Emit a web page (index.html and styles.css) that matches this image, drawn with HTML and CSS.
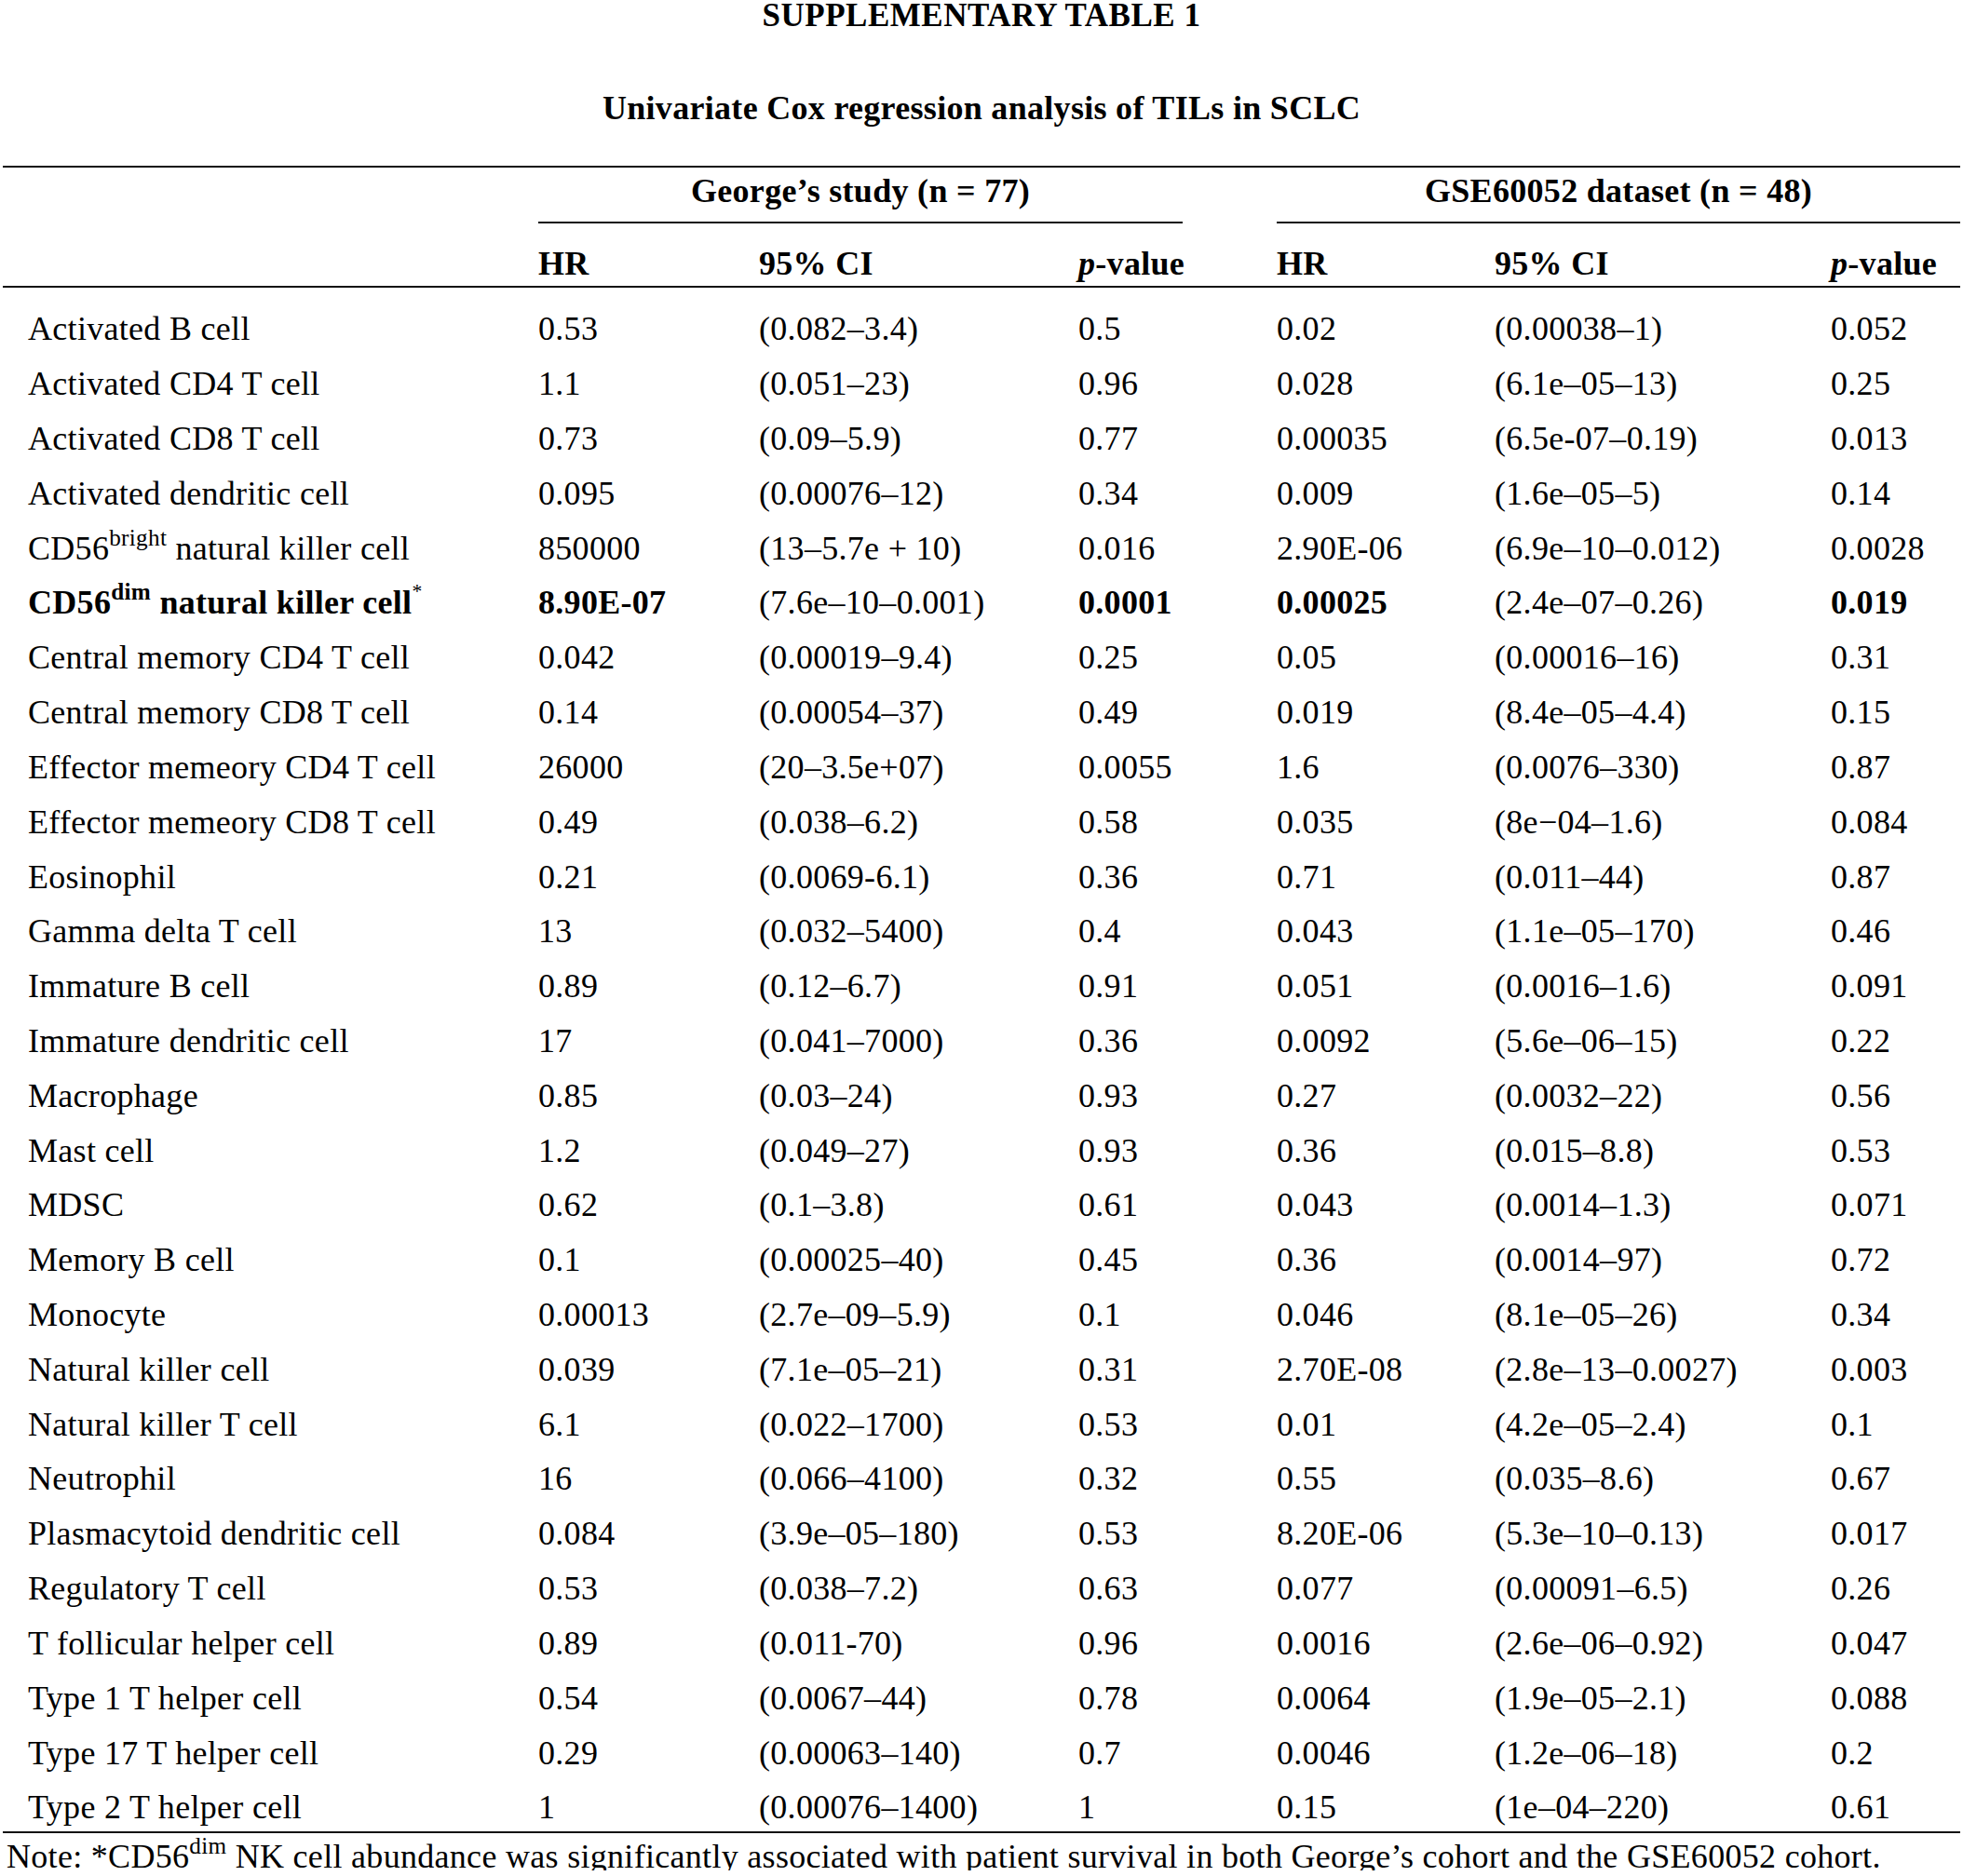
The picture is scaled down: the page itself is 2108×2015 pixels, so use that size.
FILE: index.html
```html
<!DOCTYPE html>
<html lang="en">
<head>
<meta charset="utf-8">
<title>Supplementary Table 1</title>
<link rel="stylesheet" href="styles.css">
</head>
<body>
<h1 class="title">SUPPLEMENTARY TABLE 1</h1>
<h2 class="subtitle">Univariate Cox regression analysis of TILs in SCLC</h2>
<table class="tbl">
  <colgroup>
    <col class="c-label">
    <col class="c-hr1">
    <col class="c-ci1">
    <col class="c-p1">
    <col class="c-hr2">
    <col class="c-ci2">
    <col class="c-p2">
  </colgroup>
  <thead>
    <tr class="groups">
      <th></th>
      <th colspan="3" class="grp grp-a"><div class="grp-line">George’s study (n = 77)</div></th>
      <th colspan="3" class="grp grp-b"><div class="grp-line">GSE60052 dataset (n = 48)</div></th>
    </tr>
    <tr class="cols">
      <th></th>
      <th>HR</th>
      <th>95% CI</th>
      <th><i>p</i>-value</th>
      <th>HR</th>
      <th>95% CI</th>
      <th><i>p</i>-value</th>
    </tr>
  </thead>
  <tbody>
    <tr class="first"><td>Activated B cell</td><td>0.53</td><td>(0.082–3.4)</td><td>0.5</td><td>0.02</td><td>(0.00038–1)</td><td>0.052</td></tr>
    <tr><td>Activated CD4 T cell</td><td>1.1</td><td>(0.051–23)</td><td>0.96</td><td>0.028</td><td>(6.1e–05–13)</td><td>0.25</td></tr>
    <tr><td>Activated CD8 T cell</td><td>0.73</td><td>(0.09–5.9)</td><td>0.77</td><td>0.00035</td><td>(6.5e-07–0.19)</td><td>0.013</td></tr>
    <tr><td>Activated dendritic cell</td><td>0.095</td><td>(0.00076–12)</td><td>0.34</td><td>0.009</td><td>(1.6e–05–5)</td><td>0.14</td></tr>
    <tr><td>CD56<sup>bright</sup> natural killer cell</td><td>850000</td><td>(13–5.7e + 10)</td><td>0.016</td><td>2.90E-06</td><td>(6.9e–10–0.012)</td><td>0.0028</td></tr>
    <tr class="sig"><td><b>CD56<sup>dim</sup> natural killer cell<sup class="ast">*</sup></b></td><td><b>8.90E-07</b></td><td>(7.6e–10–0.001)</td><td><b>0.0001</b></td><td><b>0.00025</b></td><td>(2.4e–07–0.26)</td><td><b>0.019</b></td></tr>
    <tr><td>Central memory CD4 T cell</td><td>0.042</td><td>(0.00019–9.4)</td><td>0.25</td><td>0.05</td><td>(0.00016–16)</td><td>0.31</td></tr>
    <tr><td>Central memory CD8 T cell</td><td>0.14</td><td>(0.00054–37)</td><td>0.49</td><td>0.019</td><td>(8.4e–05–4.4)</td><td>0.15</td></tr>
    <tr><td>Effector memeory CD4 T cell</td><td>26000</td><td>(20–3.5e+07)</td><td>0.0055</td><td>1.6</td><td>(0.0076–330)</td><td>0.87</td></tr>
    <tr><td>Effector memeory CD8 T cell</td><td>0.49</td><td>(0.038–6.2)</td><td>0.58</td><td>0.035</td><td>(8e−04–1.6)</td><td>0.084</td></tr>
    <tr><td>Eosinophil</td><td>0.21</td><td>(0.0069-6.1)</td><td>0.36</td><td>0.71</td><td>(0.011–44)</td><td>0.87</td></tr>
    <tr><td>Gamma delta T cell</td><td>13</td><td>(0.032–5400)</td><td>0.4</td><td>0.043</td><td>(1.1e–05–170)</td><td>0.46</td></tr>
    <tr><td>Immature B cell</td><td>0.89</td><td>(0.12–6.7)</td><td>0.91</td><td>0.051</td><td>(0.0016–1.6)</td><td>0.091</td></tr>
    <tr><td>Immature dendritic cell</td><td>17</td><td>(0.041–7000)</td><td>0.36</td><td>0.0092</td><td>(5.6e–06–15)</td><td>0.22</td></tr>
    <tr><td>Macrophage</td><td>0.85</td><td>(0.03–24)</td><td>0.93</td><td>0.27</td><td>(0.0032–22)</td><td>0.56</td></tr>
    <tr><td>Mast cell</td><td>1.2</td><td>(0.049–27)</td><td>0.93</td><td>0.36</td><td>(0.015–8.8)</td><td>0.53</td></tr>
    <tr><td>MDSC</td><td>0.62</td><td>(0.1–3.8)</td><td>0.61</td><td>0.043</td><td>(0.0014–1.3)</td><td>0.071</td></tr>
    <tr><td>Memory B cell</td><td>0.1</td><td>(0.00025–40)</td><td>0.45</td><td>0.36</td><td>(0.0014–97)</td><td>0.72</td></tr>
    <tr><td>Monocyte</td><td>0.00013</td><td>(2.7e–09–5.9)</td><td>0.1</td><td>0.046</td><td>(8.1e–05–26)</td><td>0.34</td></tr>
    <tr><td>Natural killer cell</td><td>0.039</td><td>(7.1e–05–21)</td><td>0.31</td><td>2.70E-08</td><td>(2.8e–13–0.0027)</td><td>0.003</td></tr>
    <tr><td>Natural killer T cell</td><td>6.1</td><td>(0.022–1700)</td><td>0.53</td><td>0.01</td><td>(4.2e–05–2.4)</td><td>0.1</td></tr>
    <tr><td>Neutrophil</td><td>16</td><td>(0.066–4100)</td><td>0.32</td><td>0.55</td><td>(0.035–8.6)</td><td>0.67</td></tr>
    <tr><td>Plasmacytoid dendritic cell</td><td>0.084</td><td>(3.9e–05–180)</td><td>0.53</td><td>8.20E-06</td><td>(5.3e–10–0.13)</td><td>0.017</td></tr>
    <tr><td>Regulatory T cell</td><td>0.53</td><td>(0.038–7.2)</td><td>0.63</td><td>0.077</td><td>(0.00091–6.5)</td><td>0.26</td></tr>
    <tr><td>T follicular helper cell</td><td>0.89</td><td>(0.011-70)</td><td>0.96</td><td>0.0016</td><td>(2.6e–06–0.92)</td><td>0.047</td></tr>
    <tr><td>Type 1 T helper cell</td><td>0.54</td><td>(0.0067–44)</td><td>0.78</td><td>0.0064</td><td>(1.9e–05–2.1)</td><td>0.088</td></tr>
    <tr><td>Type 17 T helper cell</td><td>0.29</td><td>(0.00063–140)</td><td>0.7</td><td>0.0046</td><td>(1.2e–06–18)</td><td>0.2</td></tr>
    <tr><td>Type 2 T helper cell</td><td>1</td><td>(0.00076–1400)</td><td>1</td><td>0.15</td><td>(1e–04–220)</td><td>0.61</td></tr>
  </tbody>
</table>
<p class="note">Note: *CD56<sup>dim</sup> NK cell abundance was significantly associated with patient survival in both George’s cohort and the GSE60052 cohort.</p>
</body>
</html>
```

FILE: styles.css
```css
html, body {
  margin: 0;
  padding: 0;
  background: #fff;
}

body {
  padding-top: 1px;
  font-family: "Liberation Serif", "Times New Roman", serif;
  font-size: 36px;
  letter-spacing: 0.3px;
  color: #000;
}

.title {
  margin: 0;
  font-size: 35px;
  letter-spacing: 0.5px;
  font-weight: bold;
  line-height: 32px;
  text-align: center;
}

.subtitle {
  margin: 67px 0 0;
  font-size: 36px;
  font-weight: bold;
  line-height: 32px;
  text-align: center;
}

.tbl {
  margin: 46px 0 0 3px;
  width: 2102px;
  table-layout: fixed;
  border-collapse: separate;
  border-spacing: 0;
  border-top: 2px solid #111;
  border-bottom: 2px solid #111;
}

.c-label { width: 575px; }
.c-hr1 { width: 237px; }
.c-ci1 { width: 343px; }
.c-p1 { width: 213px; }
.c-hr2 { width: 234px; }
.c-ci2 { width: 361px; }
.c-p2 { width: 139px; }

.tbl th,
.tbl td {
  padding: 0;
  text-align: left;
  white-space: nowrap;
  vertical-align: top;
}

.tbl .groups th {
  padding-top: 5px;
  font-weight: bold;
  line-height: 40px;
}

.tbl .grp {
  text-align: center;
}

.tbl .grp-a {
  padding-right: 101px;
}

.tbl .grp-b {
  padding-right: 0;
}

.grp-line {
  text-align: center;
  padding-bottom: 13px;
  border-bottom: 2px solid #111;
}

.tbl .cols th {
  padding: 23px 0 4px;
  font-weight: bold;
  line-height: 40px;
  border-bottom: 2px solid #111;
}

.tbl td {
  padding-top: 8px;
  line-height: 50.82px;
  height: 50.82px;
}

.tbl tr.first td {
  padding-top: 19.4px;
}

.tbl th:first-child,
.tbl td:first-child {
  padding-left: 27px;
}

sup {
  font-size: 0.7em;
  line-height: 0;
  vertical-align: 15px;
  letter-spacing: 0.3px;
}

sup.ast {
  font-size: 0.6em;
  font-weight: normal;
  vertical-align: 17px;
}

.note {
  margin: 10px 0 0 7px;
  line-height: 30px;
  white-space: nowrap;
}
```
